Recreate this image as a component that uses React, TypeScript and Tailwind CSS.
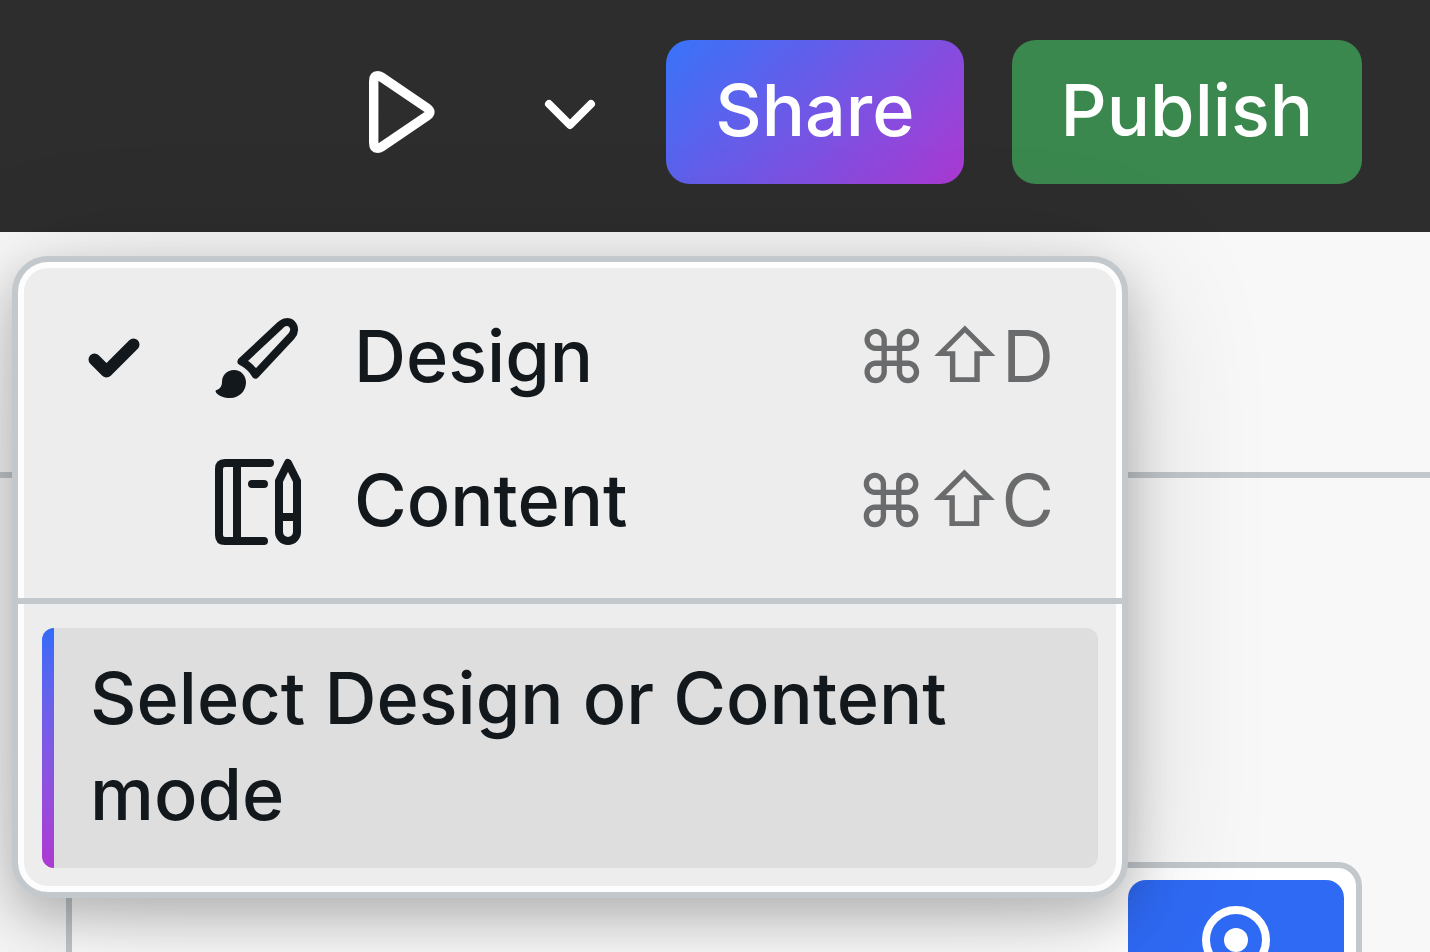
import type { ReactNode } from "react";

function Icon({ children }: { children: ReactNode }) {
  return (
    <svg
      viewBox="0 0 96 96"
      className="size-24 shrink-0"
      fill="none"
      stroke="currentColor"
      strokeWidth="8"
      strokeLinecap="round"
      strokeLinejoin="round"
      aria-hidden="true"
    >
      {children}
    </svg>
  );
}

const PlayIcon = () => (
  <Icon>
    <path
      strokeWidth="9.4"
      d="M19.7 17.5V78.5Q19.7 84.3 23.5 84.3Q25.4 84.3 27.4 83L73.6 51.6Q78.2 48 73.6 44.4L27.4 13Q25.4 11.7 23.5 11.7Q19.7 11.7 19.7 17.5Z"
    />
  </Icon>
);

const ChevronIcon = () => (
  <Icon>
    <path d="M27 40L48 61L69 40" />
  </Icon>
);

const CheckIcon = () => (
  <Icon>
    <path strokeWidth="12" d="M28.5 49.5L40.5 61.5L67.5 34.5" />
  </Icon>
);

const BrushIcon = () => (
  <Icon>
    <path d="M31.5 51.5L70.5 15C74 11.4 79 11.2 82 14.2C85 17.4 84.6 22.4 81.5 26L45.500 64.500Q40.500 56 31.500 51.500Z" />
    <path
      fill="currentColor"
      stroke="none"
      d="M6 80.200C10 79 12 76 12 72C12 65 17 60 24 60C31 60 36 65.500 36 72.500C36 81 29 88 20.500 88C14 88 8.500 86 6 82.500Q5 80.800 6 80.200Z"
    />
  </Icon>
);

const ContentIcon = () => (
  <Icon>
    <path d="M60 9H15Q9 9 9 15V81Q9 87 15 87H54" />
    <path d="M27 9V87M42 30H54" />
    <path d="M78 9L87 27V78A9 9 0 0 1 69 78V27ZM69 63H87" />
  </Icon>
);

const TargetIcon = () => (
  <Icon>
    <circle cx="48" cy="48" r="30" />
    <circle cx="48" cy="48" r="12" fill="currentColor" stroke="none" />
  </Icon>
);

type MenuRowProps = { label: string; keys: string; icon: ReactNode; checked?: boolean };

function MenuRow({ label, keys, icon, checked = false }: MenuRowProps) {
  return (
    <button
      type="button"
      role="menuitemradio"
      aria-checked={checked}
      className="flex h-36 w-full items-center gap-12 pr-[68px] pl-12 text-left"
    >
      <span className="size-24 shrink-0">{checked && <CheckIcon />}</span>
      {icon}
      <span className="flex-1 pb-1 font-medium">{label}</span>
      <span className="pb-1 text-[#6a6b6c]">{keys}</span>
    </button>
  );
}

export default function App() {
  return (
    <div className="relative flex h-screen flex-col overflow-hidden bg-[#f8f8f8] font-['Inter',sans-serif] text-[72px] leading-[96px] text-[#12181c]">
      <header className="flex shrink-0 items-center justify-end gap-12 bg-[#2d2d2d] pt-10 pr-[68px] pb-12 font-medium text-white">
        <div className="flex gap-[72px]">
          <button type="button" aria-label="Preview">
            <PlayIcon />
          </button>
          <button type="button" aria-label="Choose mode" aria-expanded="true">
            <ChevronIcon />
          </button>
        </div>
        <button
          type="button"
          className="h-36 rounded-3xl bg-linear-[135deg,#3874f9,#ab39d2] px-[49px] pb-1"
        >
          Share
        </button>
        <button type="button" className="h-36 rounded-3xl bg-[#3b884f] px-[49px] pb-1">
          Publish
        </button>
      </header>

      <main className="flex flex-1 flex-col">
        <div className="h-[246px] shrink-0 border-b-6 border-[#c2c8cc]" />
        <div className="flex-1 pt-96 pr-[68px] pl-[66px]">
          <div className="flex justify-end rounded-3xl border-6 border-[#c2c8cc] bg-white p-3">
            <button
              type="button"
              aria-label="Focus"
              className="flex w-[216px] justify-center rounded-[18px] bg-[#2f6af5] py-3 text-white"
            >
              <TargetIcon />
            </button>
          </div>
        </div>
      </main>

      <div
        role="menu"
        className="absolute top-64 left-3 w-[1116px] rounded-[36px] border-6 border-[#c2c8cc] bg-[#ededed] shadow-[inset_0_0_0_6px_#fdfdfd,0_24px_144px_rgba(0,0,0,0.16),0_18px_48px_rgba(0,0,0,0.22)]"
      >
        <div className="py-6">
          <MenuRow label="Design" keys="⌘⇧D" icon={<BrushIcon />} checked />
          <MenuRow label="Content" keys="⌘⇧C" icon={<ContentIcon />} />
        </div>
        <div className="border-t-6 border-[#c2c8cc] p-6">
          <div className="flex overflow-hidden rounded-xl bg-[#dedede]">
            <div className="w-3 shrink-0 bg-linear-to-b from-[#2f6bf8] to-[#ae38d2]" />
            <p className="px-9 pt-[22px] pb-[26px] font-medium">Select Design or Content mode</p>
          </div>
        </div>
      </div>
    </div>
  );
}
